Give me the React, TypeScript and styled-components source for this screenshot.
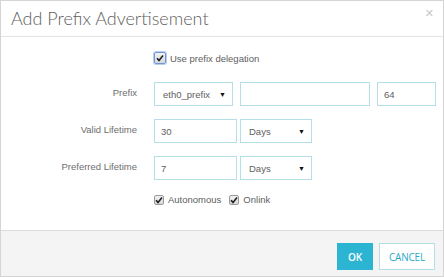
import React from 'react';
import styled, { createGlobalStyle } from 'styled-components';

const GlobalStyle = createGlobalStyle`
  html, body {
    margin: 0;
    padding: 0;
    background: #ffffff;
  }
  * {
    box-sizing: border-box;
  }
`;

const Dialog = styled.div`
  width: 444px;
  height: 277px;
  border: 1px solid #d4d4d4;
  background: #ffffff;
  display: flex;
  flex-direction: column;
  font-family: 'Liberation Sans', Arial, sans-serif;
  overflow: hidden;
`;

const Header = styled.header`
  height: 36px;
  flex: none;
  border-bottom: 1px solid #e3e3e3;
  display: flex;
  align-items: center;
  justify-content: space-between;
  padding: 0 9px 2px 10px;
`;

const Title = styled.h1`
  margin: 0;
  font-family: Lato, 'Open Sans', sans-serif;
  font-weight: 300;
  font-size: 18px;
  color: #606060;
`;

const Close = styled.span`
  font-family: 'DejaVu Sans', sans-serif;
  font-weight: bold;
  font-size: 11px;
  color: #c8c8c8;
  margin-top: -8px;
`;

const Body = styled.div`
  flex: 1;
  display: flex;
  flex-direction: column;
  padding-top: 15px;
`;

const Row = styled.div<{ $mt?: number; $h: number }>`
  display: grid;
  grid-template-columns: 136px 1fr;
  column-gap: 17px;
  height: ${(p) => p.$h}px;
  margin-top: ${(p) => p.$mt ?? 0}px;
`;

const Label = styled.div`
  text-align: right;
  font-size: 9.5px;
  color: #6e6e6e;
  align-self: center;
  padding-bottom: 3px;
`;

const Fields = styled.div<{ $gap: number }>`
  display: flex;
  gap: ${(p) => p.$gap}px;
  align-items: center;
`;

const Box = styled.div<{ $w: number }>`
  width: ${(p) => p.$w}px;
  height: 24px;
  border: 1px solid #b5dfe7;
  background: #ffffff;
  display: flex;
  align-items: center;
  justify-content: space-between;
  padding: 0 6px 0 6px;
  font-size: 9.5px;
  color: #5e5e5e;
`;

const Arrow = styled.span`
  font-size: 7px;
  color: #111111;
  margin-top: 1px;
`;

const CheckLine = styled.label`
  display: flex;
  align-items: center;
  gap: 4px;
  font-size: 9.5px;
  color: #5e5e5e;
  margin-right: 8px;
`;

const Tick = styled.span<{ $focus?: boolean }>`
  width: ${(p) => (p.$focus ? 12 : 10)}px;
  height: ${(p) => (p.$focus ? 12 : 10)}px;
  border: 1px solid ${(p) => (p.$focus ? '#6f97d6' : '#9a9a9a')};
  border-radius: 2px;
  background: linear-gradient(#f2f2f2, #d8d8d8);
  display: flex;
  align-items: center;
  justify-content: center;
  ${(p) => (p.$focus ? 'box-shadow: 0 0 0 1px #b9cdf0;' : '')}
`;

const Footer = styled.footer`
  height: 46px;
  flex: none;
  border-top: 1px solid #dcdcdc;
  background: #f4f4f4;
  display: flex;
  justify-content: flex-end;
  align-items: flex-start;
  gap: 6px;
  padding: 12px 8px 0 0;
`;

const Button = styled.button<{ $primary?: boolean }>`
  height: 27px;
  padding: 0 ${(p) => (p.$primary ? 10 : 9)}px;
  border: 1px solid ${(p) => (p.$primary ? '#2bb5d2' : '#b5dfe7')};
  background: ${(p) => (p.$primary ? '#2bb5d2' : '#ffffff')};
  color: ${(p) => (p.$primary ? '#ffffff' : '#2aa9c7')};
  font-family: 'Open Sans', sans-serif;
  font-weight: ${(p) => (p.$primary ? 600 : 400)};
  font-size: 10px;
  letter-spacing: -0.2px;
  cursor: pointer;
`;

const Check = ({ focus }: { focus?: boolean }) => (
  <Tick $focus={focus}>
    <svg width="8" height="8" viewBox="0 0 8 8">
      <path d="M1 4.2 L3 6.4 L7 1.4" fill="none" stroke="#222" strokeWidth="1.6" />
    </svg>
  </Tick>
);

const Select = ({ w, value }: { w: number; value: string }) => (
  <Box $w={w} style={{ paddingLeft: 8 }}>
    <span>{value}</span>
    <Arrow>▼</Arrow>
  </Box>
);

const App = () => {
  return (
    <>
      <GlobalStyle />
      <Dialog>
        <Header>
          <Title>Add Prefix Advertisement</Title>
          <Close>✕</Close>
        </Header>
        <Body>
          <Row $h={12}>
            <div />
            <Fields $gap={0}>
              <CheckLine>
                <Check focus />
                Use prefix delegation
              </CheckLine>
            </Fields>
          </Row>
          <Row $h={24} $mt={18}>
            <Label>Prefix</Label>
            <Fields $gap={7}>
              <Select w={79} value="eth0_prefix" />
              <Box $w={130} />
              <Box $w={59}>64</Box>
            </Fields>
          </Row>
          <Row $h={24} $mt={13}>
            <Label>Valid Lifetime</Label>
            <Fields $gap={3}>
              <Box $w={83}>30</Box>
              <Select w={72} value="Days" />
            </Fields>
          </Row>
          <Row $h={24} $mt={13}>
            <Label>Preferred Lifetime</Label>
            <Fields $gap={3}>
              <Box $w={83}>7</Box>
              <Select w={72} value="Days" />
            </Fields>
          </Row>
          <Row $h={10} $mt={14}>
            <div />
            <Fields $gap={0}>
              <CheckLine>
                <Check />
                Autonomous
              </CheckLine>
              <CheckLine>
                <Check />
                Onlink
              </CheckLine>
            </Fields>
          </Row>
        </Body>
        <Footer>
          <Button $primary>OK</Button>
          <Button>CANCEL</Button>
        </Footer>
      </Dialog>
    </>
  );
};

export default App;
